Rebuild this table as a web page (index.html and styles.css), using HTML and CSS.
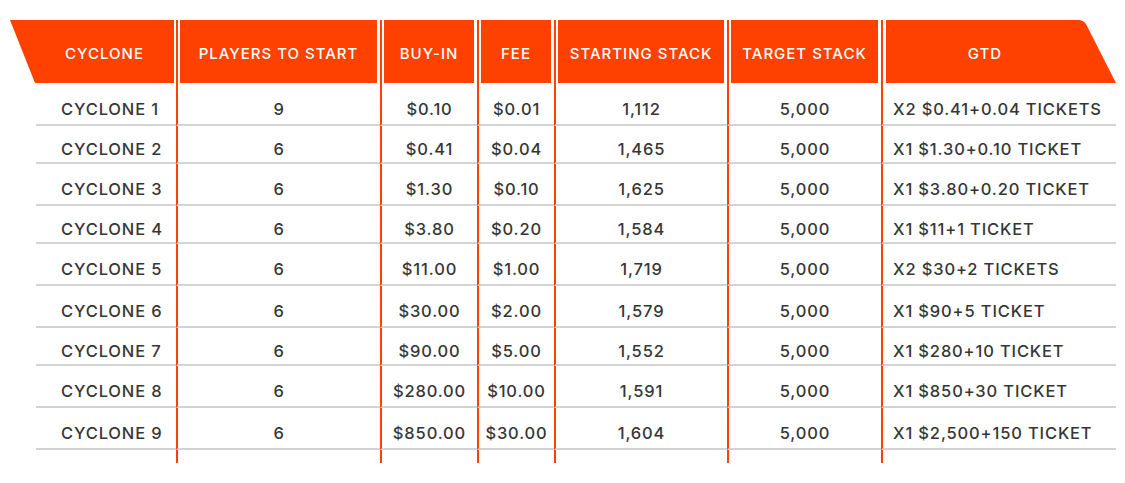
FILE: index.html
```html
<!DOCTYPE html>
<html>
<head>
<meta charset="utf-8">
<link rel="stylesheet" href="styles.css">
</head>
<body>
<div class="table">
  <div class="h c1"><div class="hbox first">CYCLONE</div></div>
  <div class="h"><div class="hbox">PLAYERS TO START</div></div>
  <div class="h"><div class="hbox">BUY-IN</div></div>
  <div class="h"><div class="hbox">FEE</div></div>
  <div class="h"><div class="hbox">STARTING STACK</div></div>
  <div class="h"><div class="hbox">TARGET STACK</div></div>
  <div class="h c7"><div class="hbox last">GTD</div></div>

  <div class="d c1">CYCLONE 1</div><div class="d">9</div><div class="d">$0.10</div><div class="d">$0.01</div><div class="d">1,112</div><div class="d">5,000</div><div class="d c7">X2 $0.41+0.04 TICKETS</div>
  <div class="d c1">CYCLONE 2</div><div class="d">6</div><div class="d">$0.41</div><div class="d">$0.04</div><div class="d">1,465</div><div class="d">5,000</div><div class="d c7">X1 $1.30+0.10 TICKET</div>
  <div class="d c1">CYCLONE 3</div><div class="d">6</div><div class="d">$1.30</div><div class="d">$0.10</div><div class="d">1,625</div><div class="d">5,000</div><div class="d c7">X1 $3.80+0.20 TICKET</div>
  <div class="d c1">CYCLONE 4</div><div class="d">6</div><div class="d">$3.80</div><div class="d">$0.20</div><div class="d">1,584</div><div class="d">5,000</div><div class="d c7">X1 $11+1 TICKET</div>
  <div class="d c1">CYCLONE 5</div><div class="d">6</div><div class="d">$11.00</div><div class="d">$1.00</div><div class="d">1,719</div><div class="d">5,000</div><div class="d c7">X2 $30+2 TICKETS</div>
  <div class="d c1">CYCLONE 6</div><div class="d">6</div><div class="d">$30.00</div><div class="d">$2.00</div><div class="d">1,579</div><div class="d">5,000</div><div class="d c7">X1 $90+5 TICKET</div>
  <div class="d c1">CYCLONE 7</div><div class="d">6</div><div class="d">$90.00</div><div class="d">$5.00</div><div class="d">1,552</div><div class="d">5,000</div><div class="d c7">X1 $280+10 TICKET</div>
  <div class="d c1">CYCLONE 8</div><div class="d">6</div><div class="d">$280.00</div><div class="d">$10.00</div><div class="d">1,591</div><div class="d">5,000</div><div class="d c7">X1 $850+30 TICKET</div>
  <div class="d c1">CYCLONE 9</div><div class="d">6</div><div class="d">$850.00</div><div class="d">$30.00</div><div class="d">1,604</div><div class="d">5,000</div><div class="d c7">X1 $2,500+150 TICKET</div>

  <div class="t c1"></div><div class="t"></div><div class="t"></div><div class="t"></div><div class="t"></div><div class="t"></div><div class="t"></div>
</div>
</body>
</html>
```

FILE: styles.css
```css
html, body {
  margin: 0;
  padding: 0;
  background: #ffffff;
}

body {
  width: 1125px;
  height: 483px;
  overflow: hidden;
  font-family: "Inter", "Noto Sans", sans-serif;
}

.table {
  margin: 20px 0 0 10px;
  display: grid;
  grid-template-columns: 166px 204px 97px 77px 173px 154px 235px;
  grid-template-rows: 63px 43px 38px 42px 38px 42px 42px 38px 42px 42px 13px;
}

.h,
.d,
.t {
  border-left: 2px solid #ff4100;
}

.c1 {
  border-left: none;
}

.h {
  display: flex;
}

.hbox {
  flex: 1;
  margin: 0 3px 0 2px;
  background: #ff4100;
  color: #ffffff;
  font-size: 15px;
  font-weight: 500;
  letter-spacing: 1px;
  display: flex;
  align-items: center;
  justify-content: center;
  padding-top: 4px;
  box-sizing: border-box;
  white-space: nowrap;
}

.hbox.first {
  margin: 0 2px 0 0;
  padding-left: 25px;
  clip-path: polygon(0 0, 100% 0, 100% 100%, 25px 100%);
}

.hbox.last {
  margin: 0 0 0 3px;
  padding-right: 32px;
  clip-path: path("M0 0 H192 Q198 0 200.5 5 L230 63 H0 Z");
}

.d {
  display: flex;
  align-items: center;
  justify-content: center;
  padding-top: 10px;
  border-bottom: 2px solid #d3d3d3;
  color: #363636;
  font-size: 16.5px;
  font-weight: 500;
  letter-spacing: 0.85px;
  white-space: nowrap;
}

.d.c1 {
  margin-left: 26px;
  justify-content: flex-start;
  padding-left: 25px;
}

.d.c7 {
  justify-content: flex-start;
  padding-left: 10px;
}
```
